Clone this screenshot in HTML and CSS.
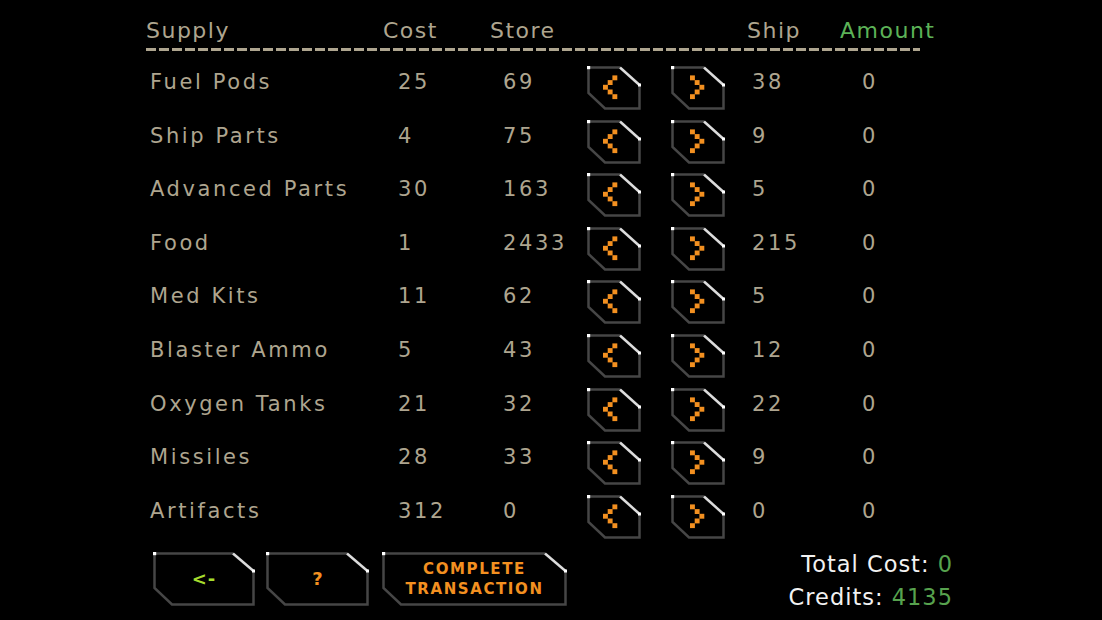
FILE: index.html
```html
<!DOCTYPE html>
<html>
<head>
<meta charset="utf-8">
<link rel="stylesheet" href="styles.css">
</head>
<body>
<svg class="defs" width="0" height="0">
  <defs>
    <g id="frame">
      <polyline points="52.5,19 52.5,42.5 18,42.5 1.5,27 1.5,1.5 33,1.5" fill="none" stroke="#464646" stroke-width="2.5"/>
      <line x1="33" y1="1.5" x2="52.5" y2="19" stroke="#dcdcdc" stroke-width="2.5"/>
      <rect x="0" y="0" width="3.2" height="3.2" fill="#ffffff"/>
      <rect x="51" y="17.5" width="3" height="3" fill="#ffffff"/>
    </g>
    <g id="btnL">
      <use href="#frame"/>
      <g fill="#f39020">
        <rect x="25.4" y="9.4" width="4.9" height="4.9"/>
        <rect x="20.7" y="14.1" width="4.9" height="4.9"/>
        <rect x="16" y="18.8" width="4.9" height="4.9"/>
        <rect x="20.7" y="23.5" width="4.9" height="4.9"/>
        <rect x="25.4" y="28.2" width="4.9" height="4.9"/>
      </g>
    </g>
    <g id="btnR">
      <use href="#frame"/>
      <g fill="#f39020">
        <rect x="19" y="9.4" width="4.9" height="4.9"/>
        <rect x="23.7" y="14.1" width="4.9" height="4.9"/>
        <rect x="28.4" y="18.8" width="4.9" height="4.9"/>
        <rect x="23.7" y="23.5" width="4.9" height="4.9"/>
        <rect x="19" y="28.2" width="4.9" height="4.9"/>
      </g>
    </g>
  </defs>
</svg>
<div class="screen">
  <div class="head">
    <span>Supply</span>
    <span>Cost</span>
    <span>Store</span>
    <span>Ship</span>
    <span class="amount-h">Amount</span>
  </div>
  <div class="rule"></div>
  <div class="rows">
    <div class="row"><span class="cell">Fuel Pods</span><span class="cell">25</span><span class="cell">69</span><svg class="btn" viewBox="0 0 54 44"><use href="#btnL"/></svg><svg class="btn" viewBox="0 0 54 44"><use href="#btnR"/></svg><span class="cell">38</span><span class="cell">0</span></div>
    <div class="row"><span class="cell">Ship Parts</span><span class="cell">4</span><span class="cell">75</span><svg class="btn" viewBox="0 0 54 44"><use href="#btnL"/></svg><svg class="btn" viewBox="0 0 54 44"><use href="#btnR"/></svg><span class="cell">9</span><span class="cell">0</span></div>
    <div class="row"><span class="cell">Advanced Parts</span><span class="cell">30</span><span class="cell">163</span><svg class="btn" viewBox="0 0 54 44"><use href="#btnL"/></svg><svg class="btn" viewBox="0 0 54 44"><use href="#btnR"/></svg><span class="cell">5</span><span class="cell">0</span></div>
    <div class="row"><span class="cell">Food</span><span class="cell">1</span><span class="cell">2433</span><svg class="btn" viewBox="0 0 54 44"><use href="#btnL"/></svg><svg class="btn" viewBox="0 0 54 44"><use href="#btnR"/></svg><span class="cell">215</span><span class="cell">0</span></div>
    <div class="row"><span class="cell">Med Kits</span><span class="cell">11</span><span class="cell">62</span><svg class="btn" viewBox="0 0 54 44"><use href="#btnL"/></svg><svg class="btn" viewBox="0 0 54 44"><use href="#btnR"/></svg><span class="cell">5</span><span class="cell">0</span></div>
    <div class="row"><span class="cell">Blaster Ammo</span><span class="cell">5</span><span class="cell">43</span><svg class="btn" viewBox="0 0 54 44"><use href="#btnL"/></svg><svg class="btn" viewBox="0 0 54 44"><use href="#btnR"/></svg><span class="cell">12</span><span class="cell">0</span></div>
    <div class="row"><span class="cell">Oxygen Tanks</span><span class="cell">21</span><span class="cell">32</span><svg class="btn" viewBox="0 0 54 44"><use href="#btnL"/></svg><svg class="btn" viewBox="0 0 54 44"><use href="#btnR"/></svg><span class="cell">22</span><span class="cell">0</span></div>
    <div class="row"><span class="cell">Missiles</span><span class="cell">28</span><span class="cell">33</span><svg class="btn" viewBox="0 0 54 44"><use href="#btnL"/></svg><svg class="btn" viewBox="0 0 54 44"><use href="#btnR"/></svg><span class="cell">9</span><span class="cell">0</span></div>
    <div class="row"><span class="cell">Artifacts</span><span class="cell">312</span><span class="cell">0</span><svg class="btn" viewBox="0 0 54 44"><use href="#btnL"/></svg><svg class="btn" viewBox="0 0 54 44"><use href="#btnR"/></svg><span class="cell">0</span><span class="cell">0</span></div>
  </div>
  <div class="footer">
    <div class="fbtn fb1">
      <svg class="fframe" width="102" height="54" viewBox="0 0 102 54">
        <polyline points="100.5,19 100.5,52.5 19,52.5 1.5,36 1.5,1.5 80,1.5" fill="none" stroke="#464646" stroke-width="2.5"/>
        <line x1="80" y1="1.5" x2="100.5" y2="19" stroke="#dcdcdc" stroke-width="2.5"/>
        <rect x="0" y="0" width="3.2" height="3.2" fill="#fff"/>
        <rect x="99" y="17.5" width="3" height="3" fill="#fff"/>
      </svg>
      <span class="flabel back">&lt;-</span>
    </div>
    <div class="fbtn fb2">
      <svg class="fframe" width="103" height="54" viewBox="0 0 103 54">
        <polyline points="101.5,19 101.5,52.5 19,52.5 1.5,36 1.5,1.5 81,1.5" fill="none" stroke="#464646" stroke-width="2.5"/>
        <line x1="81" y1="1.5" x2="101.5" y2="19" stroke="#dcdcdc" stroke-width="2.5"/>
        <rect x="0" y="0" width="3.2" height="3.2" fill="#fff"/>
        <rect x="100" y="17.5" width="3" height="3" fill="#fff"/>
      </svg>
      <span class="flabel help">?</span>
    </div>
    <div class="fbtn fb3">
      <svg class="fframe" width="185" height="54" viewBox="0 0 185 54">
        <polyline points="183.5,19 183.5,52.5 19,52.5 1.5,36 1.5,1.5 163,1.5" fill="none" stroke="#464646" stroke-width="2.5"/>
        <line x1="163" y1="1.5" x2="183.5" y2="19" stroke="#dcdcdc" stroke-width="2.5"/>
        <rect x="0" y="0" width="3.2" height="3.2" fill="#fff"/>
        <rect x="182" y="17.5" width="3" height="3" fill="#fff"/>
      </svg>
      <span class="flabel complete">COMPLETE<br>TRANSACTION</span>
    </div>
    <div class="totals">
      <div>Total Cost: <span class="val">0</span></div>
      <div>Credits: <span class="val">4135</span></div>
    </div>
  </div>
</div>
</body>
</html>
```

FILE: styles.css
```css
html, body {
  margin: 0;
  padding: 0;
  background: #000;
}
body {
  width: 1102px;
  height: 620px;
  overflow: hidden;
  font-family: "DejaVu Sans", "Liberation Sans", sans-serif;
  color: #aea58f;
}
.defs {
  display: block;
  width: 0;
  height: 0;
}
.screen {
  padding: 18px 0 0 146px;
}
.head {
  display: grid;
  grid-template-columns: 237px 107px 257px 93px auto;
  height: 25px;
  font-size: 22px;
  line-height: 25px;
  letter-spacing: 1.5px;
}
.amount-h {
  color: #5cb257;
}
.rule {
  width: 774px;
  height: 3px;
  margin-top: 5px;
  background: repeating-linear-gradient(90deg, #aea58f 0 10px, transparent 10px 13px);
}
.rows {
  margin-top: 14px;
  padding-left: 4px;
}
.row {
  display: grid;
  grid-template-columns: 248px 105px 84px 84px 81px 110px auto;
  height: 53.6px;
  font-size: 21px;
  line-height: 20px;
  letter-spacing: 2.6px;
}
.cell {
  padding-top: 7px;
  white-space: nowrap;
}
.btn {
  display: block;
  width: 54px;
  height: 44px;
  margin-top: 1px;
}
.footer {
  display: flex;
  align-items: flex-start;
  width: 807px;
  box-sizing: border-box;
  margin-top: 4.6px;
  padding-left: 7px;
}
.fbtn {
  display: grid;
  align-items: center;
  justify-items: center;
}
.fframe, .flabel {
  grid-area: 1 / 1;
}
.fframe {
  display: block;
}
.fb2 {
  margin-left: 11px;
}
.fb3 {
  margin-left: 13px;
}
.flabel {
  font-weight: bold;
  text-align: center;
}
.back {
  color: #a6dc2e;
  font-size: 18px;
  letter-spacing: 1px;
}
.help {
  color: #f39020;
  font-size: 18px;
}
.complete {
  color: #f39020;
  font-size: 15px;
  line-height: 20px;
  letter-spacing: 1.6px;
}
.totals {
  margin-left: auto;
  margin-top: -4px;
  text-align: right;
  font-size: 22.5px;
  line-height: 33px;
  letter-spacing: 1px;
  color: #f2f2f2;
}
.val {
  color: #57a24e;
}
```
